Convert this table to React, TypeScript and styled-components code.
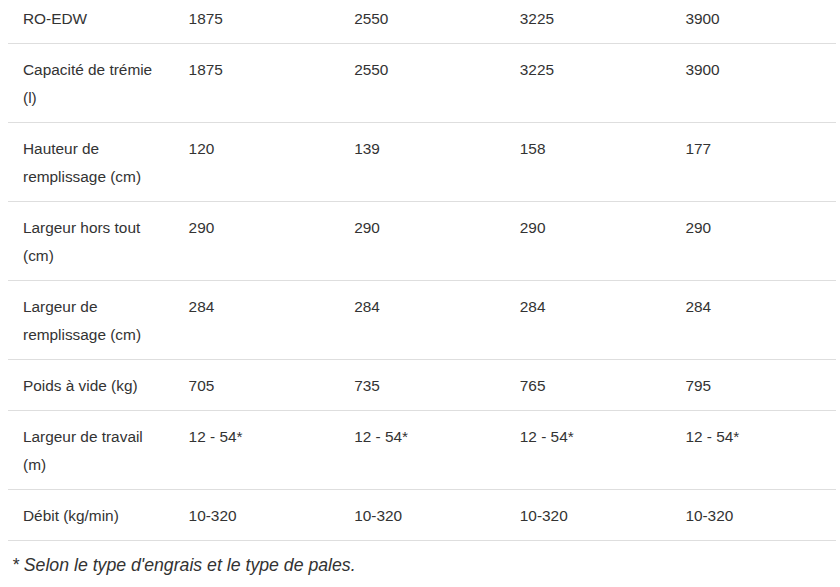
import React from "react";
import styled, { createGlobalStyle } from "styled-components";

const Global = createGlobalStyle`
  html, body { margin: 0; padding: 0; background: #fff; }
  body { font-family: "Liberation Sans", Arial, sans-serif; color: #333; overflow: hidden; }
`;

const Page = styled.div`
  padding: 0 4px 0 8px;
  margin-top: -7px;
`;

const Table = styled.table`
  width: 828px;
  border-collapse: collapse;
  table-layout: fixed;
`;

const Row = styled.tr`
  border-bottom: 1px solid #dedede;
`;

const Cell = styled.td`
  padding: 12px 15px 10px 15px;
  font-size: 15.4px;
  line-height: 28px;
  color: #333;
  vertical-align: top;
  text-align: left;
`;

const Note = styled.p`
  margin: 10px 0 0 4px;
  font-size: 17.7px;
  line-height: 28px;
  font-style: italic;
  color: #333;
`;

const rows: [string, string, string, string, string][] = [
  ["RO-EDW", "1875", "2550", "3225", "3900"],
  ["Capacité de trémie (l)", "1875", "2550", "3225", "3900"],
  ["Hauteur de remplissage (cm)", "120", "139", "158", "177"],
  ["Largeur hors tout (cm)", "290", "290", "290", "290"],
  ["Largeur de remplissage (cm)", "284", "284", "284", "284"],
  ["Poids à vide (kg)", "705", "735", "765", "795"],
  ["Largeur de travail (m)", "12 - 54*", "12 - 54*", "12 - 54*", "12 - 54*"],
  ["Débit (kg/min)", "10-320", "10-320", "10-320", "10-320"],
];

export default function App() {
  return (
    <>
      <Global />
      <Page>
        <Table>
          <tbody>
            {rows.map((r, i) => (
              <Row key={i}>
                {r.map((c, j) => (
                  <Cell key={j}>{c}</Cell>
                ))}
              </Row>
            ))}
          </tbody>
        </Table>
        <Note>* Selon le type d'engrais et le type de pales.</Note>
      </Page>
    </>
  );
}
